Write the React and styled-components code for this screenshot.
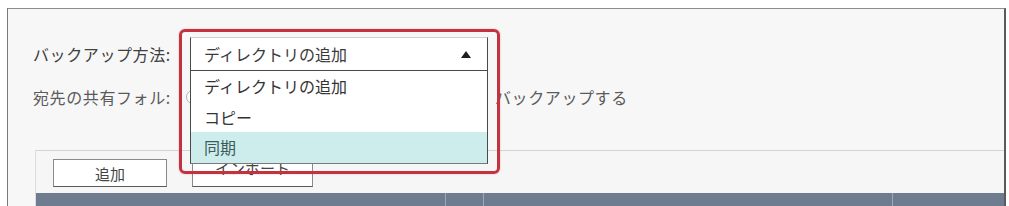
import React from 'react'
import styled, { createGlobalStyle } from 'styled-components'

const GlobalStyle = createGlobalStyle`
  html, body {
    margin: 0;
    padding: 0;
    background: #ffffff;
    font-family: "Noto Sans CJK JP", "Noto Sans", sans-serif;
    overflow: hidden;
  }
`

const Panel = styled.div`
  margin: 8px 3px 0 7px;
  height: 198px;
  box-sizing: border-box;
  border-top: 1px solid #8c8c8c;
  border-left: 1px solid #7a7a7a;
  border-right: 2px solid #5a5a5a;
  background: #f7f7f7;
  padding-left: 25px;
  overflow: hidden;
`

const FormRow = styled.div`
  display: flex;
  align-items: center;
  height: 34px;
  margin-top: ${p => p.top}px;
`

const Label = styled.div`
  width: 157px;
  flex-shrink: 0;
  font-size: 16px;
  letter-spacing: 0.6px;
  color: ${p => p.muted ? '#5a5a5a' : '#404040'};
  white-space: nowrap;
`

const SelectWrap = styled.div`
  position: relative;
  width: 298px;
  height: 34px;
  z-index: 2;
`

const SelectBox = styled.div`
  box-sizing: border-box;
  height: 34px;
  display: flex;
  align-items: center;
  justify-content: space-between;
  padding: 0 16px 0 13px;
  background: #ffffff;
  border: 1px solid #4a4a4a;
  border-top-color: #d0d0d0;
  font-size: 16px;
  color: #3a3a3a;
`

const Arrow = styled.span`
  width: 0;
  height: 0;
  border-left: 5px solid transparent;
  border-right: 5px solid transparent;
  border-bottom: 7px solid #1e1e1e;
`

const Menu = styled.ul`
  position: absolute;
  top: 34px;
  left: 0;
  right: 0;
  margin: 0;
  padding: 0;
  list-style: none;
  background: #ffffff;
  border: 1px solid #4a4a4a;
  border-top: none;
  border-bottom-color: #7a7a7a;
`

const MenuItem = styled.li`
  height: 30.5px;
  display: flex;
  align-items: center;
  padding-left: 13px;
  font-size: 16px;
  color: ${p => p.active ? '#3f5a5a' : '#333333'};
  background: ${p => p.active ? '#cdeded' : '#ffffff'};
`

const Highlight = styled.div`
  position: absolute;
  left: -11px;
  top: -8px;
  width: 321px;
  height: 145px;
  box-sizing: border-box;
  border: 3px solid #c3323f;
  border-radius: 6px;
  box-shadow: 0 0 2px rgba(195, 50, 63, 0.35);
  pointer-events: none;
`

const Radio = styled.span`
  width: 12px;
  height: 12px;
  margin-left: -4px;
  border: 1px solid #b0b0b0;
  border-radius: 50%;
  background: #ffffff;
  flex-shrink: 0;
`

const Value = styled.span`
  margin-left: 295px;
  font-size: 16px;
  letter-spacing: 0.6px;
  color: #5a5a5a;
  white-space: nowrap;
`

const ListArea = styled.div`
  margin: 36px 0 0 2px;
  border-top: 1px solid #d4d4d4;
  border-left: 1px solid #dcdcdc;
  background: #f6f6f6;
`

const Toolbar = styled.div`
  display: flex;
  gap: 25px;
  padding: 8px 0 6px 17px;
`

const Button = styled.button`
  width: ${p => p.w}px;
  height: 28px;
  box-sizing: border-box;
  background: #ffffff;
  border: 1px solid #8a8a8a;
  border-bottom-color: #5a5a5a;
  font-family: inherit;
  font-size: 15px;
  line-height: 1;
  color: #444444;
  padding: 0 0 ${p => p.lift || 0}px;
`

const HeaderBar = styled.div`
  display: grid;
  grid-template-columns: 410px 38px 409px 1fr;
  height: 14px;
  background: #6f7c8f;
`

const HeaderCell = styled.div`
  border-right: ${p => p.last ? 'none' : '1px solid #9ea8b7'};
`

export default function App() {
  return (
    <>
      <GlobalStyle />
      <Panel>
        <FormRow top={28}>
          <Label>バックアップ方法:</Label>
          <SelectWrap>
            <SelectBox>
              <span>ディレクトリの追加</span>
              <Arrow />
            </SelectBox>
            <Menu>
              <MenuItem>ディレクトリの追加</MenuItem>
              <MenuItem>コピー</MenuItem>
              <MenuItem active>同期</MenuItem>
            </Menu>
            <Highlight />
          </SelectWrap>
        </FormRow>
        <FormRow top={9}>
          <Label muted>宛先の共有フォル:</Label>
          <Radio />
          <Value>バックアップする</Value>
        </FormRow>
        <ListArea>
          <Toolbar>
            <Button w={114}>追加</Button>
            <Button w={121} lift={14}>インポート</Button>
          </Toolbar>
          <HeaderBar>
            <HeaderCell />
            <HeaderCell />
            <HeaderCell />
            <HeaderCell last />
          </HeaderBar>
        </ListArea>
      </Panel>
    </>
  )
}
